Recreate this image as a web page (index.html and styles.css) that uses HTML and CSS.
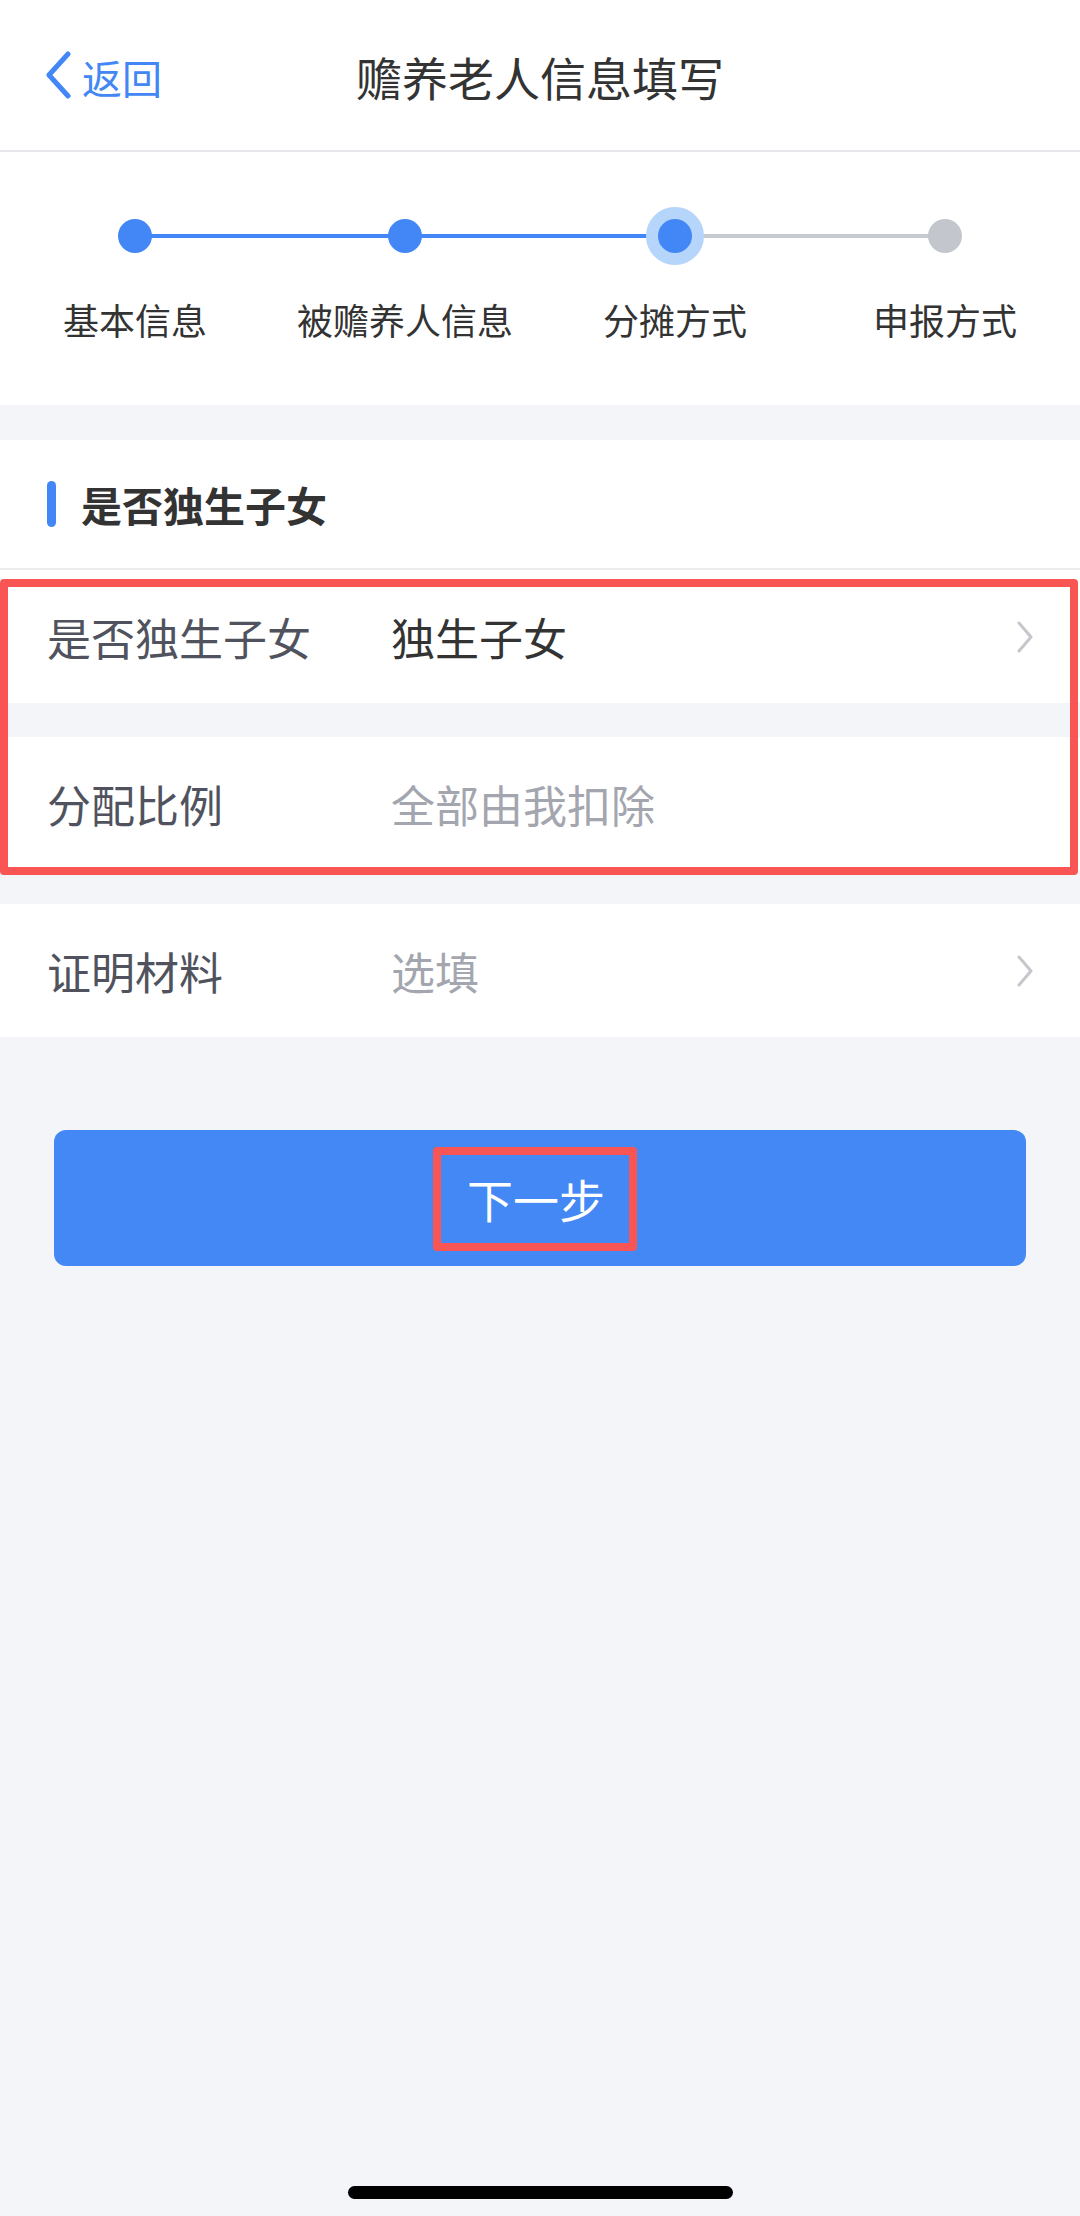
FILE: index.html
```html
<!DOCTYPE html>
<html lang="zh-CN">
<head>
<meta charset="utf-8">
<title>赡养老人信息填写</title>
<link rel="stylesheet" href="styles.css">
</head>
<body>
<div class="page">
  <header class="nav">
    <a class="back">
      <svg class="back-icon" viewBox="0 0 28 48" width="28" height="48"><path d="M24 3 L5 24 L24 45" fill="none" stroke="#4287f5" stroke-width="5" stroke-linecap="round" stroke-linejoin="round"/></svg>
      <span class="back-text">返回</span>
    </a>
    <h1 class="nav-title">赡养老人信息填写</h1>
  </header>

  <section class="steps">
    <div class="step step-first">
      <div class="track"><span class="dot"></span></div>
      <div class="step-label">基本信息</div>
    </div>
    <div class="step step-done">
      <div class="track"><span class="dot"></span></div>
      <div class="step-label">被赡养人信息</div>
    </div>
    <div class="step step-active">
      <div class="track"><span class="dot"></span></div>
      <div class="step-label">分摊方式</div>
    </div>
    <div class="step step-last">
      <div class="track"><span class="dot"></span></div>
      <div class="step-label">申报方式</div>
    </div>
  </section>

  <section class="section-head">
    <span class="section-bar"></span>
    <span class="section-title">是否独生子女</span>
  </section>

  <div class="group">
    <div class="row">
      <span class="row-label">是否独生子女</span>
      <span class="row-value">独生子女</span>
      <svg class="chev" viewBox="0 0 20 32" width="20" height="32"><path d="M4 2 L16 16 L4 30" fill="none" stroke="#c5c7cd" stroke-width="3" stroke-linecap="round" stroke-linejoin="round"/></svg>
    </div>
    <div class="row row-gap">
      <span class="row-label">分配比例</span>
      <span class="row-value placeholder">全部由我扣除</span>
    </div>
    <div class="highlight"></div>
  </div>

  <div class="row row-gap">
    <span class="row-label">证明材料</span>
    <span class="row-value placeholder">选填</span>
    <svg class="chev" viewBox="0 0 20 32" width="20" height="32"><path d="M4 2 L16 16 L4 30" fill="none" stroke="#c5c7cd" stroke-width="3" stroke-linecap="round" stroke-linejoin="round"/></svg>
  </div>

  <div class="btn-wrap">
    <button class="btn-next"><span class="btn-text">下一步</span></button>
  </div>

  <div class="spacer"></div>
  <div class="home-bar"></div>
</div>
</body>
</html>
```

FILE: styles.css
```css
* { box-sizing: border-box; }
html, body { margin: 0; padding: 0; }
body {
  background: #f4f5f9;
  font-family: "Noto Sans CJK SC", "Noto Sans", sans-serif;
  color: #333;
}
.page {
  width: 1080px;
  height: 2216px;
  display: flex;
  flex-direction: column;
}

/* nav */
.nav {
  height: 152px;
  background: #fff;
  border-bottom: 2px solid #e6e7eb;
  display: grid;
  grid-template-columns: 1fr auto 1fr;
  align-items: center;
}
.back {
  display: flex;
  align-items: center;
  padding-left: 44px;
  color: #4287f5;
  grid-column: 1;
  grid-row: 1;
}
.back-icon { display: block; margin-top: 0; }
.back-text {
  font-size: 40px;
  line-height: 48px;
  margin-left: 10px;
  margin-top: 4px;
}
.nav-title {
  grid-column: 2;
  grid-row: 1;
  margin: 0;
  font-size: 46px;
  font-weight: 400;
  color: #333;
  line-height: 56px;
  margin-top: 2px;
}

/* steps */
.steps {
  background: #fff;
  display: grid;
  grid-template-columns: repeat(4, 1fr);
  padding: 55px 0 62px;
}
.step {
  display: flex;
  flex-direction: column;
  align-items: stretch;
}
.track {
  height: 58px;
  display: flex;
  align-items: center;
  justify-content: center;
  background-repeat: no-repeat;
  background-position: center;
  background-size: 100% 4px;
}
.step-first .track { background-image: linear-gradient(to right, transparent 50%, #4287f5 50%); }
.step-done .track { background-image: linear-gradient(to right, #4287f5 50%, #4287f5 50%); }
.step-active .track { background-image: linear-gradient(to right, #4287f5 50%, #c8cad2 50%); }
.step-last .track { background-image: linear-gradient(to right, #c8cad2 50%, transparent 50%); }
.dot {
  width: 34px;
  height: 34px;
  border-radius: 50%;
  background: #4287f5;
}
.step-active .dot {
  width: 58px;
  height: 58px;
  border: 12px solid #b5d5fb;
  background: #4287f5;
}
.step-last .dot { background: #c4c6ce; }
.step-label {
  margin-top: 30px;
  text-align: center;
  font-size: 36px;
  line-height: 48px;
  color: #333;
}

/* section head */
.section-head {
  margin-top: 35px;
  height: 130px;
  background: #fff;
  border-bottom: 2px solid #ececee;
  display: flex;
  align-items: center;
  padding-left: 47px;
}
.section-bar {
  width: 9px;
  height: 46px;
  border-radius: 5px;
  background: #4287f5;
}
.section-title {
  margin-left: 25px;
  font-size: 41px;
  font-weight: 700;
  color: #333;
  line-height: 50px;
}

/* rows */
.group { position: relative; }
.row {
  height: 133px;
  background: #fff;
  display: flex;
  align-items: center;
  padding: 0 47px;
}
.row-gap { margin-top: 34px; }
.row-label {
  width: 344px;
  font-size: 44px;
  color: #50535e;
  line-height: 52px;
}
.row-value {
  flex: 1;
  font-size: 44px;
  color: #333;
  line-height: 52px;
}
.row-value.placeholder { color: #a3a6ae; }
.chev { display: block; margin-right: -2px; }

.highlight {
  position: absolute;
  left: 0;
  right: 2px;
  top: 9px;
  bottom: -5px;
  border: 8px solid #f95555;
  border-radius: 4px;
}

/* button */
.btn-wrap { padding: 93px 54px 0; }
.btn-next {
  width: 100%;
  height: 136px;
  border: 0;
  border-radius: 12px;
  background: #4388f5;
  display: flex;
  align-items: center;
  justify-content: center;
  padding: 0;
  font-family: inherit;
}
.btn-text {
  display: inline-block;
  border: 8px solid #f95555;
  border-radius: 4px;
  padding: 0 24px 0 26px;
  height: 104px;
  line-height: 86px;
  font-size: 46px;
  color: #fff;
  margin-top: 2px;
  margin-right: 10px;
}

.spacer { flex: 1; }
.home-bar {
  align-self: center;
  width: 385px;
  height: 13px;
  border-radius: 7px;
  background: #000;
  margin-bottom: 17px;
}
```
